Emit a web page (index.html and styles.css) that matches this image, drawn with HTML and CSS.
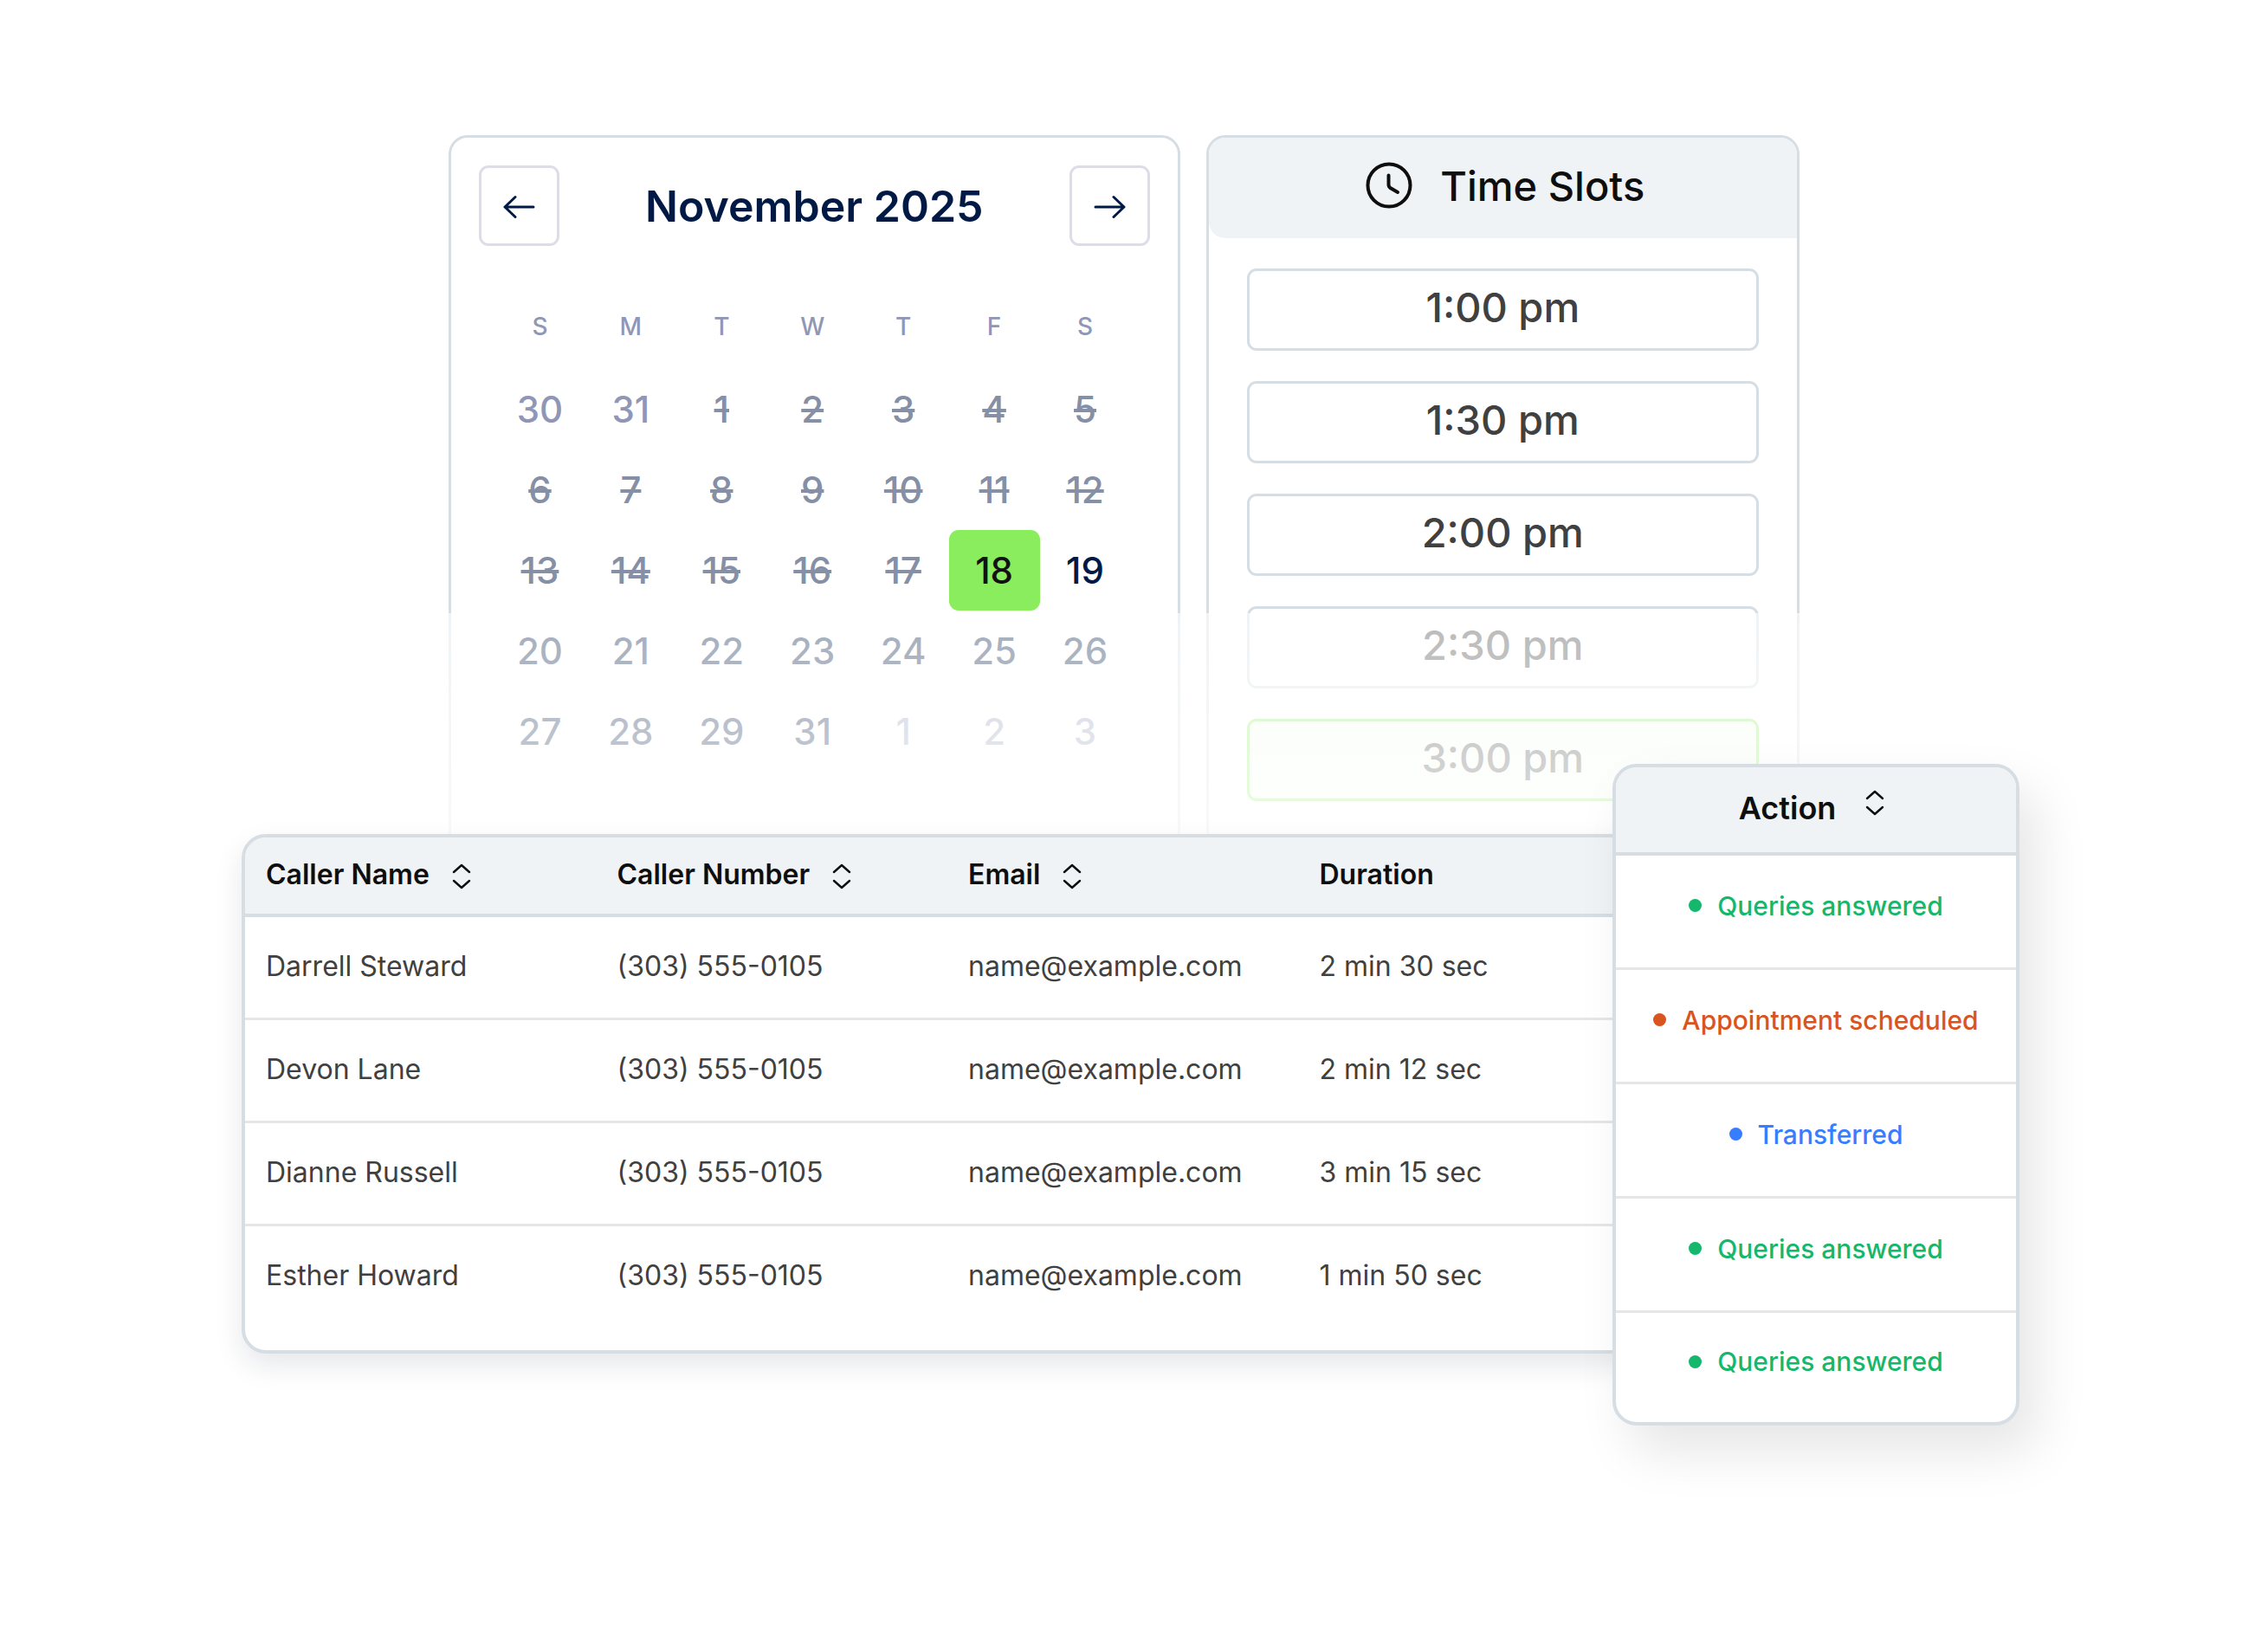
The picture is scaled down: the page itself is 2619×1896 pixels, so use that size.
FILE: index.html
```html
<!DOCTYPE html>
<html lang="en">
<head>
  <meta charset="UTF-8">
  <meta name="viewport" content="width=device-width, initial-scale=1">
  <title>Appointments and Calls</title>
  <link rel="stylesheet" href="styles.css">
</head>
<body>
  <!-- sort arrows, shared by all table headings -->
  <svg class="defs" aria-hidden="true">
    <symbol id="sort" viewBox="0 0 22 30">
      <path d="M2 10l9-8 9 8M2 20l9 8 9-8" fill="none" stroke="currentColor" stroke-width="2.4" stroke-linecap="round" stroke-linejoin="round"/>
    </symbol>
  </svg>

  <main class="container">
    <div class="scheduler">
      <section class="calendar">
        <div class="calendar-header">
          <button class="nav-btn" aria-label="Previous month">
            <svg width="38" height="28" viewBox="0 0 38 28"><path d="M35 15H2M14 3.500L2 15l12 11.500"/></svg>
          </button>
          <h2>November 2025</h2>
          <button class="nav-btn" aria-label="Next month">
            <svg width="38" height="28" viewBox="0 0 38 28"><path d="M3 15H36M24 3.500L36 15l-12 11.500"/></svg>
          </button>
        </div>
        <table class="days">
          <thead>
            <tr><th>S</th><th>M</th><th>T</th><th>W</th><th>T</th><th>F</th><th>S</th></tr>
          </thead>
          <tbody>
            <tr>
              <td><button class="day other">30</button></td>
              <td><button class="day other">31</button></td>
              <td><button class="day past">1</button></td>
              <td><button class="day past">2</button></td>
              <td><button class="day past">3</button></td>
              <td><button class="day past">4</button></td>
              <td><button class="day past">5</button></td>
            </tr>
            <tr>
              <td><button class="day past">6</button></td>
              <td><button class="day past">7</button></td>
              <td><button class="day past">8</button></td>
              <td><button class="day past">9</button></td>
              <td><button class="day past">10</button></td>
              <td><button class="day past">11</button></td>
              <td><button class="day past">12</button></td>
            </tr>
            <tr>
              <td><button class="day past">13</button></td>
              <td><button class="day past">14</button></td>
              <td><button class="day past">15</button></td>
              <td><button class="day past">16</button></td>
              <td><button class="day past">17</button></td>
              <td><button class="day selected">18</button></td>
              <td><button class="day">19</button></td>
            </tr>
            <tr>
              <td><button class="day">20</button></td>
              <td><button class="day">21</button></td>
              <td><button class="day">22</button></td>
              <td><button class="day">23</button></td>
              <td><button class="day">24</button></td>
              <td><button class="day">25</button></td>
              <td><button class="day">26</button></td>
            </tr>
            <tr>
              <td><button class="day">27</button></td>
              <td><button class="day">28</button></td>
              <td><button class="day">29</button></td>
              <td><button class="day">31</button></td>
              <td><button class="day other">1</button></td>
              <td><button class="day other">2</button></td>
              <td><button class="day other">3</button></td>
            </tr>
          </tbody>
        </table>
      </section>

      <section class="time-slots">
        <div class="slots-header">
          <svg width="54" height="54" viewBox="0 0 54 54" aria-hidden="true">
            <circle cx="27" cy="27" r="24.500"/>
            <path d="M26.500 15.500V26c0 2 .5 3 2 4l8.500 5"/>
          </svg>
          <h2>Time Slots</h2>
        </div>
        <div class="slots-list">
          <button class="slot">1:00 pm</button>
          <button class="slot">1:30 pm</button>
          <button class="slot">2:00 pm</button>
          <button class="slot">2:30 pm</button>
          <button class="slot active">3:00 pm</button>
        </div>
      </section>
    </div>

    <div class="calls">
      <section class="call-log">
        <table>
          <thead>
            <tr>
              <th>Caller Name <svg class="sort"><use href="#sort"/></svg></th>
              <th>Caller Number <svg class="sort"><use href="#sort"/></svg></th>
              <th>Email <svg class="sort"><use href="#sort"/></svg></th>
              <th>Duration</th>
            </tr>
          </thead>
          <tbody>
            <tr><td>Darrell Steward</td><td>(303) 555-0105</td><td>name@example.com</td><td>2 min 30 sec</td></tr>
            <tr><td>Devon Lane</td><td>(303) 555-0105</td><td>name@example.com</td><td>2 min 12 sec</td></tr>
            <tr><td>Dianne Russell</td><td>(303) 555-0105</td><td>name@example.com</td><td>3 min 15 sec</td></tr>
            <tr><td>Esther Howard</td><td>(303) 555-0105</td><td>name@example.com</td><td>1 min 50 sec</td></tr>
          </tbody>
        </table>
      </section>

      <section class="actions">
        <h3>Action <svg class="sort"><use href="#sort"/></svg></h3>
        <ul>
          <li class="answered">Queries answered</li>
          <li class="scheduled">Appointment scheduled</li>
          <li class="transferred">Transferred</li>
          <li class="answered">Queries answered</li>
          <li class="answered">Queries answered</li>
        </ul>
      </section>
    </div>
  </main>
</body>
</html>
```
FILE: styles.css
```css
* {
  box-sizing: border-box;
}
body {
  margin: 0;
  background: #fff;
  color: #404040;
  font-family: Inter, "Liberation Sans", sans-serif;
}
h2, h3, ul {
  margin: 0;
  padding: 0;
}
button {
  font-family: inherit;
  cursor: pointer;
}
.defs {
  display: none;
}
.container {
  padding: 156px 287px 200px 279px;
}

/* calendar + time slots */
.scheduler {
  position: relative;
  display: grid;
  grid-template-columns: 844fr 685fr;
  gap: 30px;
  margin: 0 254px 0 239px;
}
/* fades the lower part out behind the call log */
.scheduler::after {
  content: "";
  position: absolute;
  top: 552px;
  left: 0;
  right: 0;
  bottom: 0;
  background: linear-gradient(rgba(255,255,255,0.64), rgba(255,255,255,0.84));
  pointer-events: none;
}
.calendar, .time-slots {
  border: 3px solid #d6dde3;
  border-radius: 22px;
}
.calendar {
  padding: 32px;
}
.calendar-header {
  display: flex;
  justify-content: space-between;
  align-items: center;
  color: #001a45;
}
.calendar-header h2 {
  font-size: 50px;
  font-weight: 600;
}
.nav-btn {
  display: flex;
  align-items: center;
  justify-content: center;
  width: 93px;
  height: 93px;
  padding: 0;
  background: #fff;
  border: 3px solid #dcdde9;
  border-radius: 11px;
}
.nav-btn path {
  fill: none;
  stroke: #001a45;
  stroke-width: 3;
  stroke-linecap: round;
  stroke-linejoin: round;
}
.days {
  width: calc(100% - 40px);
  margin: 44px 22px 0 18px;
  table-layout: fixed;
  border-collapse: collapse;
}
.days th {
  height: 98px;
  padding: 0;
  color: #9096b6;
  font-size: 28px;
  font-weight: 500;
}
.days td {
  height: 93px;
  padding: 0;
}
.day {
  display: block;
  width: 100%;
  height: 93px;
  padding: 0;
  background: none;
  border: none;
  border-radius: 11px;
  color: #001a45;
  font-size: 42px;
  font-weight: 500;
}
.day.other {
  color: #9096b6;
}
.day.past {
  color: #858fa5;
  text-decoration: line-through;
}
.day.selected {
  background: #89ed5d;
  color: #121212;
}

.slots-header {
  display: flex;
  align-items: center;
  justify-content: center;
  gap: 32px;
  height: 116px;
  padding: 0 0 6px 6px;
  background: #eff3f6;
  border-radius: 19px 19px 0 19px;
  color: #0e0e0e;
}
.slots-header h2 {
  font-size: 47px;
  font-weight: 500;
}
.slots-header svg {
  fill: none;
  stroke: currentColor;
  stroke-width: 4;
  stroke-linecap: round;
}
.slots-list {
  display: flex;
  flex-direction: column;
  gap: 35px;
  padding: 35px 44px 68px;
}
.slot {
  height: 95px;
  padding: 0 0 6px;
  background: #fff;
  border: 3px solid #d6dde3;
  border-radius: 11px;
  color: #404040;
  font-size: 47px;
  font-weight: 500;
}
.slot.active {
  background: #f1fdec;
  border-color: #89ed5d;
}

/* call log + action column */
.calls {
  position: relative;
  z-index: 1;
  display: grid;
  grid-template-columns: 1fr 470px;
  align-items: start;
  margin-top: -114px;
}
.call-log, .actions {
  overflow: hidden;
  background: #fff;
  border: 4px solid #d6dde3;
  border-radius: 28px;
}
.call-log {
  margin: 81px -47px 0 0;
  padding-bottom: 24px;
  box-shadow: 0 14px 32px rgba(20,30,60,0.1);
}
.call-log table {
  width: 100%;
  table-layout: fixed;
  border-collapse: separate;
  border-spacing: 0;
}
.call-log th, .call-log td {
  padding: 0 0 4px 24px;
  text-align: left;
  font-size: 32px;
  white-space: nowrap;
}
.call-log th {
  height: 92px;
  background: #eff3f6;
  border-bottom: 4px solid #d6dde3;
  color: #0e0e0e;
  font-weight: 600;
}
.call-log td {
  height: 119px;
  border-bottom: 3px solid #e6e6e6;
}
.call-log tr:last-child td {
  border-bottom-color: transparent;
}
.call-log th .sort {
  margin-left: 18px;
  vertical-align: -6px;
}
.sort {
  width: 22px;
  height: 30px;
}

.actions {
  box-shadow: 20px 30px 60px rgba(0,0,0,0.1);
}
.actions h3 {
  display: flex;
  align-items: flex-start;
  justify-content: center;
  gap: 34px;
  padding: 26px 10px 30px 0;
  background: #eff3f6;
  border-bottom: 4px solid #d6dde3;
  color: #0e0e0e;
  font-size: 36px;
  font-weight: 600;
  line-height: 42px;
}
.actions ul {
  list-style: none;
}
.actions li {
  display: flex;
  align-items: center;
  justify-content: center;
  gap: 18px;
  height: 132px;
  padding-bottom: 14px;
  border-bottom: 3px solid #e6e6e6;
  font-size: 30px;
  font-weight: 500;
}
.actions li:last-child {
  height: 126px;
  border-bottom: none;
}
.actions li::before {
  content: "";
  width: 15px;
  height: 15px;
  border-radius: 50%;
  background: currentColor;
}
.answered {
  color: #15b76c;
}
.scheduled {
  color: #d9541e;
}
.transferred {
  color: #377dff;
}
```
